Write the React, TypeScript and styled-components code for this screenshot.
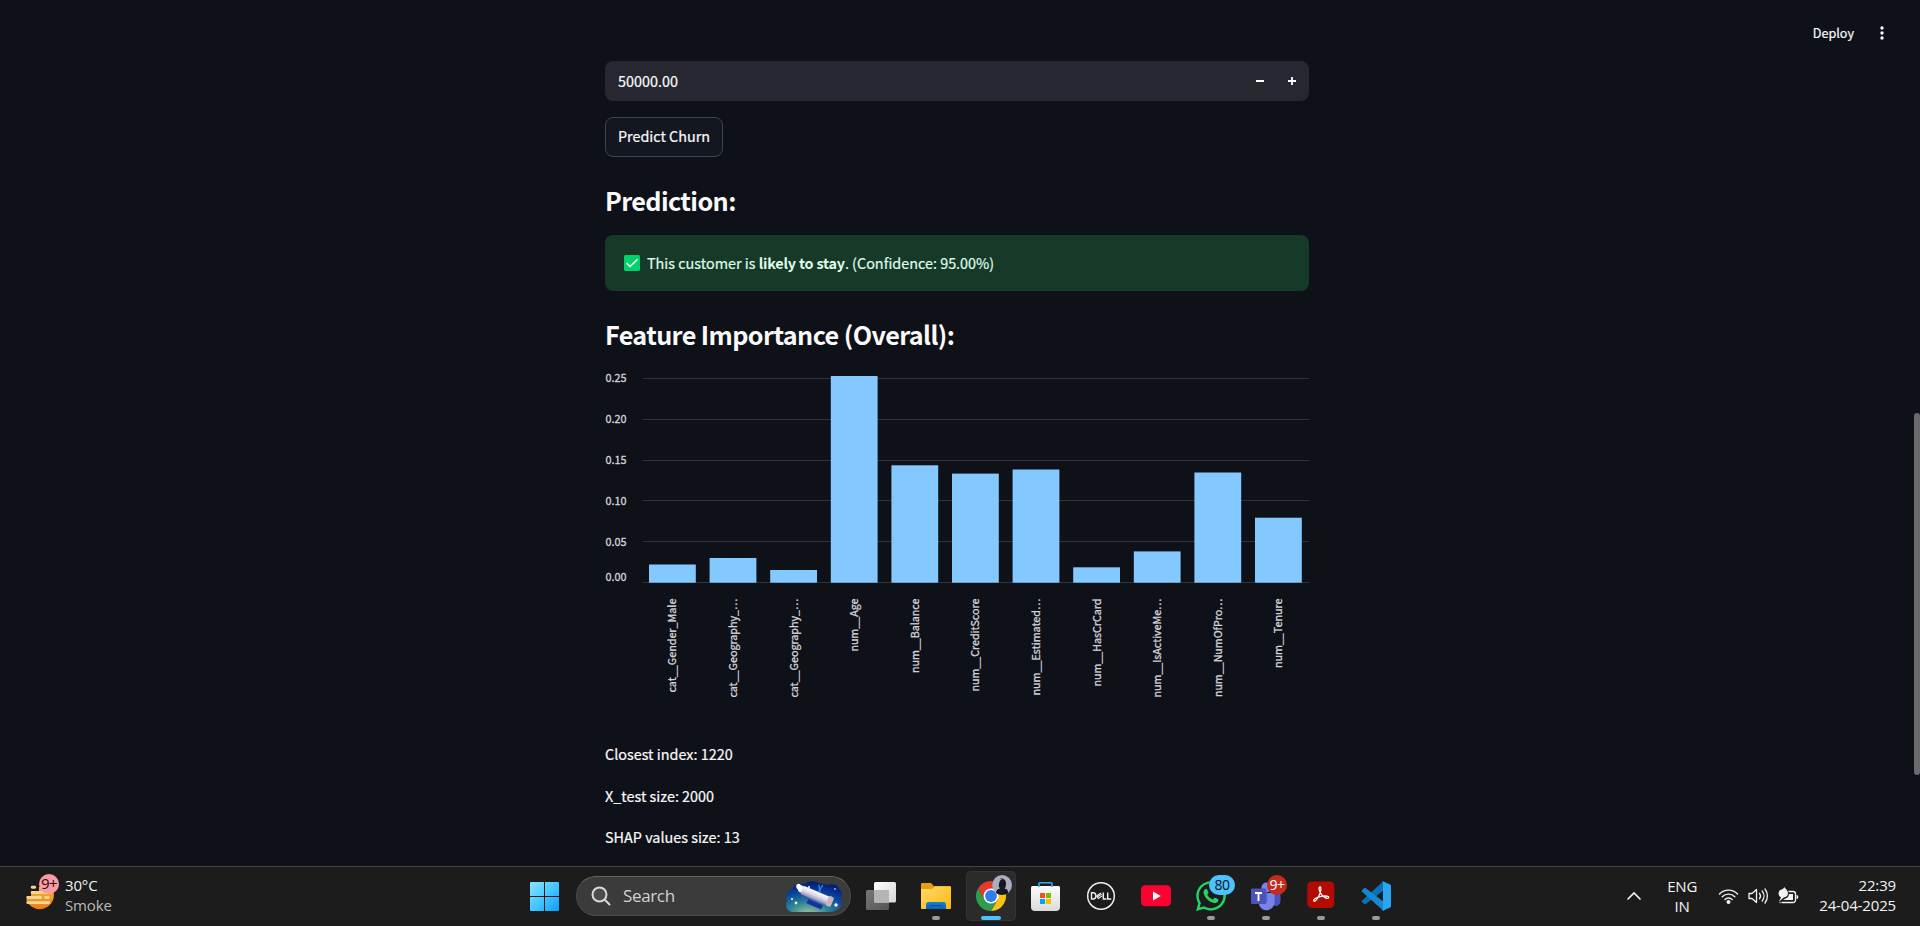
import React from "react";
import styled, { createGlobalStyle } from "styled-components";
import { FaWhatsapp } from "react-icons/fa";

const appFont = '"Noto Sans CJK SC", "Noto Sans", sans-serif';
const systemFont = '"Open Sans", "Noto Sans", sans-serif';

const GlobalStyle = createGlobalStyle`
  * { box-sizing: border-box; }
  body { margin: 0; background: #0e1117; overflow: hidden; }
`;

const Desktop = styled.div`
  width: 1920px;
  height: 926px;
  display: flex;
  flex-direction: column;
  overflow: hidden;
`;

const Page = styled.div`
  height: 866px;
  display: grid;
  grid-template-columns: 1fr 6px;
  background: #0e1117;
  color: #fafafa;
  font-family: ${appFont};
  font-size: 14.4px;
  -webkit-text-stroke: 0.2px currentColor;
`;

const Content = styled.div`
  display: flex;
  flex-direction: column;
  min-width: 0;
`;

const ScrollTrack = styled.div`
  padding-top: 413px;
`;

const ScrollThumb = styled.div`
  height: 362px;
  border-radius: 3px;
  background: #6b6b6d;
`;

const AppHeader = styled.header`
  height: 61px;
  padding: 5px 24px 0 0;
  display: flex;
  justify-content: flex-end;
  align-items: center;
  gap: 20px;
`;

const DeployButton = styled.span`
  font-size: 12.6px;
  line-height: 20px;
  padding-bottom: 1px;
`;

const Main = styled.main`
  width: 704px;
  margin-left: 605px;
  display: flex;
  flex-direction: column;
`;

const NumberInput = styled.div`
  height: 40px;
  padding: 0 1px 0 13px;
  display: flex;
  align-items: center;
  border-radius: 8px;
  background: #262730;
`;

const InputValue = styled.span`
  flex: 1;
  padding-bottom: 1px;
`;

const StepButton = styled.span`
  width: 32px;
  display: flex;
  justify-content: center;
`;

const PredictButton = styled.button`
  width: 118px;
  height: 40px;
  margin-top: 16px;
  padding: 0 0 3px;
  border: 1px solid #41444c;
  border-radius: 8px;
  background: #131720;
  color: #fafafa;
  font: 14.4px ${appFont};
  -webkit-text-stroke: 0.2px currentColor;
  white-space: nowrap;
`;

const Heading = styled.h3`
  height: 78px;
  margin: 0;
  padding-top: 26px;
  font-size: 25.2px;
  line-height: 34px;
  font-weight: 700;
  letter-spacing: -0.6px;
  -webkit-text-stroke: 0;
  white-space: nowrap;
`;

const SuccessAlert = styled.div`
  height: 56px;
  padding: 0 19px;
  display: flex;
  align-items: center;
  gap: 7px;
  border-radius: 8px;
  background: #173928;
  color: #dffde9;
  white-space: pre;
`;

const AlertText = styled.span`
  padding-bottom: 2px;
`;

const AlertStrong = styled.b`
  letter-spacing: -0.2px;
  -webkit-text-stroke: 0;
`;

const Chart = styled.svg`
  display: block;
  width: 704px;
  height: 372px;
  font-family: ${appFont};
  font-size: 10.8px;
  fill: #d3d5da;
  -webkit-text-stroke: 0;
`;

const ChartLabel = styled.text`
  stroke: #d3d5da;
  stroke-width: 0.3px;
`;

const Paragraph = styled.p`
  margin: 0 0 15.6px;
  line-height: 26px;
`;

const Taskbar = styled.footer`
  height: 60px;
  display: grid;
  grid-template-columns: 519px 882px 1fr;
  border-top: 1px solid #454548;
  background: #1c1c1c;
  color: #f3f3f3;
  font-family: ${systemFont};
  font-size: 15px;
  line-height: 20px;
`;

const Weather = styled.div`
  padding: 0 0 1px 24px;
  display: flex;
  align-items: center;
  gap: 5px;
`;

const IconSlot = styled.div`
  position: relative;
  display: flex;
`;

const TextStack = styled.div<{ $align?: string }>`
  padding-bottom: 3px;
  display: flex;
  flex-direction: column;
  text-align: ${(p) => p.$align ?? "left"};
  letter-spacing: -0.15px;
`;

const Muted = styled.span`
  color: #b9b9b9;
`;

const Badge = styled.span<{ $x: number; $y: number; $w: number; $bg: string; $fg: string; $size?: number }>`
  position: absolute;
  left: ${(p) => p.$x}px;
  top: ${(p) => p.$y}px;
  width: ${(p) => p.$w}px;
  height: 20px;
  border-radius: 10px;
  background: ${(p) => p.$bg};
  color: ${(p) => p.$fg};
  font-size: ${(p) => p.$size ?? 14}px;
  line-height: 19px;
  letter-spacing: -0.5px;
  text-align: center;
`;

const AppGroup = styled.div`
  display: flex;
  align-items: center;
  padding-bottom: 1px;
  gap: 5px;
`;

const Tile = styled.div<{ $active?: boolean }>`
  position: relative;
  width: 50px;
  height: 50px;
  border-radius: 5px;
  background: ${(p) => (p.$active ? "#2b2b2b" : "transparent")};
  box-shadow: ${(p) => (p.$active ? "inset 0 0 0 1px #343434" : "none")};
`;

const Indicator = styled.span<{ $active?: boolean }>`
  position: absolute;
  bottom: 1px;
  left: ${(p) => (p.$active ? 15 : 21)}px;
  width: ${(p) => (p.$active ? 20 : 8)}px;
  height: 4px;
  border-radius: 2px;
  background: ${(p) => (p.$active ? "#4cc2ff" : "#9a9a9a")};
`;

const SearchBox = styled.div`
  width: 275px;
  height: 40px;
  margin-left: 2px;
  padding: 0 7px 0 14px;
  display: flex;
  align-items: center;
  gap: 12px;
  border: 1px solid #4a4a4a;
  border-top-color: #636363;
  border-radius: 20px;
  background: #3b3b3b;
  color: #d2d2d2;
  font-size: 17px;
  letter-spacing: -0.35px;
`;

const SearchLabel = styled.span`
  flex: 1;
`;

const Tray = styled.div`
  padding: 0 24px 1px 0;
  display: flex;
  justify-content: flex-end;
  align-items: center;
`;

const TrayIcons = styled.div`
  margin: 0 20px 0 21px;
  display: flex;
  align-items: center;
  gap: 9px;
`;

const LanguageStack = styled(TextStack)`
  margin-left: 25px;
  padding-bottom: 1px;
`;

const bars = [
  { label: "cat__Gender_Male", top: 195.5, len: 94 },
  { label: "cat__Geography_…", top: 189, len: 99 },
  { label: "cat__Geography_…", top: 201, len: 99 },
  { label: "num__Age", top: 7, len: 53 },
  { label: "num__Balance", top: 96.3, len: 74.5 },
  { label: "num__CreditScore", top: 104.6, len: 93 },
  { label: "num__Estimated…", top: 100.5, len: 97 },
  { label: "num__HasCrCard", top: 198.3, len: 88 },
  { label: "num__IsActiveMe…", top: 182.4, len: 99 },
  { label: "num__NumOfPro…", top: 103.5, len: 98.5 },
  { label: "num__Tenure", top: 148.7, len: 69.5 },
];

const ticks = [
  { label: "0.25", line: 9.5, text: 13.3 },
  { label: "0.20", line: 50.5, text: 54.2 },
  { label: "0.15", line: 91.5, text: 95.1 },
  { label: "0.10", line: 131.5, text: 136 },
  { label: "0.05", line: 172.5, text: 176.9 },
  { label: "0.00", line: 213.5, text: 211.8 },
];

function ImportanceChart() {
  return (
    <Chart viewBox="0 0 704 372">
      {ticks.map((t) => (
        <g key={t.label}>
          <line x1="38" x2="704" y1={t.line} y2={t.line} stroke="#31333c" />
          <ChartLabel x="0.5" y={t.text} textLength="21" lengthAdjust="spacingAndGlyphs">{t.label}</ChartLabel>
        </g>
      ))}
      {bars.map((b, i) => {
        const x = 44 + i * 60.6;
        return (
          <g key={i}>
            <rect x={x} y={b.top} width="46.8" height={213.7 - b.top} fill="#83c9ff" />
            <ChartLabel
              transform={`translate(${x + 27.4} ${229.6 + b.len}) rotate(-90)`}
              textLength={b.len}
              lengthAdjust="spacingAndGlyphs"
            >
              {b.label}
            </ChartLabel>
          </g>
        );
      })}
    </Chart>
  );
}

const IconCanvas = styled.svg.attrs({ width: 50, height: 50, viewBox: "0 0 50 50" })`
  display: block;
`;

function StartIcon() {
  return (
    <IconCanvas>
      <defs>
        <linearGradient id="win" x1="11" y1="11" x2="40" y2="40" gradientUnits="userSpaceOnUse">
          <stop offset="0" stopColor="#8be3ff" /><stop offset=".5" stopColor="#46c8ff" /><stop offset="1" stopColor="#0f9bfb" />
        </linearGradient>
      </defs>
      <path d="M12 11h13v14H11V12a1 1 0 0 1 1-1zM26 11h13a1 1 0 0 1 1 1v13H26zM11 26h14v14H12a1 1 0 0 1-1-1zM26 26h14v13a1 1 0 0 1-1 1H26z" fill="url(#win)" />
    </IconCanvas>
  );
}

function TaskViewIcon() {
  return (
    <IconCanvas>
      <defs>
        <linearGradient id="tvw" x1="0" y1="0" x2="1" y2="1"><stop offset="0" stopColor="#fff" /><stop offset="1" stopColor="#d4d4d4" /></linearGradient>
        <linearGradient id="tvg" x1="0" y1="0" x2="1" y2="1"><stop offset="0" stopColor="#777" /><stop offset="1" stopColor="#565656" /></linearGradient>
      </defs>
      <rect x="10" y="19" width="23" height="20" rx="1.5" fill="url(#tvg)" />
      <rect x="18" y="11" width="22" height="20.5" rx="1.5" fill="url(#tvw)" />
      <path d="M18 19h15v12.5H19.5a1.5 1.5 0 0 1-1.5-1.5z" fill="#b5b5b5" />
    </IconCanvas>
  );
}

function ExplorerIcon() {
  return (
    <IconCanvas>
      <defs>
        <linearGradient id="fold" x1="0" y1="0" x2="1" y2="1"><stop offset="0" stopColor="#ffd968" /><stop offset="1" stopColor="#fdb813" /></linearGradient>
        <linearGradient id="foldb" x1="0" y1="0" x2="0" y2="1"><stop offset="0" stopColor="#1284d8" /><stop offset="1" stopColor="#0a63b4" /></linearGradient>
      </defs>
      <path d="M10 13a1 1 0 0 1 1-1h9l3 3.3h15.5a1.5 1.5 0 0 1 1.5 1.5V22H10z" fill="#e2a00a" />
      <path d="M10 18h11l3-2.7h15a1 1 0 0 1 1 1V37a1 1 0 0 1-1 1H11a1 1 0 0 1-1-1z" fill="url(#fold)" />
      <path d="M15 38v-4.5a2.500 2.500 0 0 1 2.500-2.500h15a2.500 2.500 0 0 1 2.500 2.500V38z" fill="url(#foldb)" />
      <path d="M18.500 34.500h13" stroke="#084a8c" />
    </IconCanvas>
  );
}

function ChromeIcon() {
  return (
    <IconCanvas>
      <path d="M12 17.500A15 15 0 0 1 38 17.500H25l-6.500 11.250z" fill="#e33b2e" />
      <path d="M38 17.500A15 15 0 0 1 25 40l6.500-11.250L25 17.500z" fill="#fbc116" />
      <path d="M12 17.500A15 15 0 0 0 25 40l6.500-11.250h-13z" fill="#2f9e4c" />
      <circle cx="25" cy="25" r="7.500" fill="#fff" />
      <circle cx="25" cy="25" r="5.900" fill="#2f7cec" />
      <circle cx="36.100" cy="14" r="9.900" fill="#a9aec0" />
      <path d="M30 22c0-3 2-4 4-4.500-1-1-1.500-3-1-5s1.500-4.500 3.500-4.500 3.500 2 3.500 4.500-.5 4-1.500 5c2 .5 4 1.500 3.500 4.500a9.900 9.900 0 0 1-12 0z" fill="#17181d" />
      <path d="M34 7.500h3" stroke="#c04860" />
    </IconCanvas>
  );
}

function StoreIcon() {
  return (
    <IconCanvas>
      <defs>
        <linearGradient id="bag" x1="0" y1="0" x2="0" y2="1"><stop offset="0" stopColor="#fdfdfd" /><stop offset="1" stopColor="#dadada" /></linearGradient>
      </defs>
      <path d="M10 16.500a1.500 1.500 0 0 1 1.500-1.500h26a1.500 1.500 0 0 1 1.500 1.500V36a4 4 0 0 1-4 4H14a4 4 0 0 1-4-4z" fill="url(#bag)" />
      <path d="M18 16v-3.200a1 1 0 0 1 1-1h11a1 1 0 0 1 1 1V16" fill="none" stroke="#27b4ee" strokeWidth="1.600" />
      <rect x="19" y="22" width="5" height="5" fill="#f25022" />
      <rect x="25" y="22" width="5" height="5" fill="#7fba00" />
      <rect x="19" y="28" width="5" height="5" fill="#00a4ef" />
      <rect x="25" y="28" width="5" height="5" fill="#ffb900" />
    </IconCanvas>
  );
}

function DellIcon() {
  return (
    <IconCanvas>
      <circle cx="25" cy="25" r="13.300" fill="none" stroke="#eee" strokeWidth="1.500" />
      <g fill="none" stroke="#eee" strokeWidth="1.400">
        <path d="M15.500 21.800v6.200h1.600c3.700 0 3.700-6.200 0-6.200z" />
        <path d="M20.500 25l4.500-3M21 26.300l4.700-3.200M22 27.800l4.500-3.200M20.500 25l2 2.800" strokeWidth="1.100" />
        <path d="M27.300 21.500v6.500h3.200M31.700 21.500v6.500h3.500" />
      </g>
    </IconCanvas>
  );
}

function YouTubeIcon() {
  return (
    <IconCanvas>
      <rect x="10" y="14.300" width="30" height="21" rx="4.500" fill="#ff0033" />
      <path d="M22 20.500v9l7.800-4.500z" fill="#fff" />
    </IconCanvas>
  );
}

function TeamsIcon() {
  return (
    <IconCanvas>
      <circle cx="25.500" cy="16.500" r="5" fill="#7b83eb" />
      <circle cx="35" cy="18" r="3.500" fill="#5059c9" />
      <path d="M28 22h10a1.500 1.500 0 0 1 1.500 1.500V30a5 5 0 0 1-8 4z" fill="#4b53bc" />
      <path d="M19 22h13.500a1 1 0 0 1 1 1v8.500a8 8 0 0 1-15.500 2.500z" fill="#7b83eb" />
      <path d="M18 31h8.500V22H18z" fill="#4b53bc" opacity=".4" />
      <rect x="10" y="17.500" width="15.300" height="15.500" rx="1.300" fill="#4b53bc" />
      <path d="M14 22h7M17.500 22v8" stroke="#fff" strokeWidth="1.900" />
    </IconCanvas>
  );
}

function AcrobatIcon() {
  return (
    <IconCanvas>
      <rect x="11.300" y="10.500" width="27" height="26.500" rx="4.500" fill="#b30b00" />
      <path
        d="M24 16c-1.600.2-1.200 4.200 1.600 7.700 2.300 3 6 4.600 7 3.200.9-1.600-3.300-2.400-7.300-1.600-4.200.8-8.300 3-7.500 4.600.9 1.500 3.700-1.800 5.300-5.300 1.700-3.700 2.500-8.800.9-8.600z"
        fill="none" stroke="#fff" strokeWidth="1.300" strokeLinejoin="round"
      />
    </IconCanvas>
  );
}

function CodeIcon() {
  return (
    <IconCanvas>
      <path d="M32 10.500L10.300 30.300l2.500 2.500c.6.6 1.200.6 1.900.1L32.500 19.500z" fill="#0a70b8" />
      <path d="M10.300 20l2.500-2.600c.6-.6 1.200-.6 1.900-.1l18 13.500-.4 8.900z" fill="#1688d2" />
      <path d="M32 10.200l7 3.300c.7.300 1 .8 1 1.500v20c0 .7-.3 1.200-1 1.500l-7 3.300c-.8.300-1.500.1-2-.4.800.5 2 .2 2-1V11.600c0-1.200-1.200-1.600-2-1 .5-.6 1.200-.8 2-.4z" fill="#29a5f2" />
    </IconCanvas>
  );
}

function SearchArt() {
  return (
    <svg width="58" height="32" viewBox="0 0 58 32">
      <defs>
        <radialGradient id="sky" cx=".4" cy="1.05" r="1">
          <stop offset="0" stopColor="#9fc596" /><stop offset=".35" stopColor="#2f8798" /><stop offset=".7" stopColor="#08449a" /><stop offset="1" stopColor="#061c78" />
        </radialGradient>
        <linearGradient id="scope" x1="0" y1="0" x2="0" y2="1">
          <stop offset="0" stopColor="#fff" /><stop offset=".5" stopColor="#dfd6ec" /><stop offset="1" stopColor="#8f87b8" />
        </linearGradient>
      </defs>
      <path d="M3 30c-3-3-2-7-1-9-2-5 0-10 5-12 2-5 7-6 12-5 4-3 10-4 15-1 5 2 7 1 9 2 5-2 10 0 11 4 4 3 3 7 2 10 2 5 0 9-4 11-4 2-8 2-12 2H10c-3 0-5 0-7-2z" fill="url(#sky)" />
      <g transform="rotate(23 30 16)">
        <rect x="12" y="11.500" width="8" height="7" rx="2" fill="#f2effa" />
        <rect x="16" y="11" width="30" height="9" rx="1" fill="url(#scope)" />
        <rect x="43" y="10" width="5.500" height="10.500" rx="2" fill="#c9b4bd" />
        <path d="M25 21.500h16v4.500H25z" fill="#1a2fa0" />
        <path d="M29 4l4.500 7M33 3l-1.500 8" stroke="#2789dc" strokeWidth="1.400" />
      </g>
      <ellipse cx="14" cy="7" rx="2.600" ry="3.200" transform="rotate(-25 14 7)" fill="#fff" />
      <circle cx="7" cy="19" r="1" fill="#fff" /><circle cx="11" cy="23" r="1.400" fill="#e9f4b0" />
      <circle cx="24" cy="7" r="1" fill="#fff" /><circle cx="51" cy="25" r="1.700" fill="#fff" /><circle cx="50" cy="9" r="1" fill="#8ab0ff" />
    </svg>
  );
}

function WeatherIcon() {
  return (
    <svg width="36" height="40" viewBox="0 0 36 40">
      <defs>
        <linearGradient id="sun" x1="0" y1="0" x2="0" y2="1"><stop offset="0" stopColor="#fbc640" /><stop offset="1" stopColor="#ee7d13" /></linearGradient>
      </defs>
      <circle cx="15.700" cy="19" r="14.200" fill="url(#sun)" />
      <path d="M0 3h24v8H15v4H7v8H0z" fill="#1c1c1c" />
      <path d="M8.200 11.300h2.500M8.200 16.500h15M3.700 21.500h13M21.500 21.500h3M3.700 26.600h21" stroke="#f0d698" strokeWidth="2.900" strokeLinecap="round" />
    </svg>
  );
}

export default function App() {
  return (
    <Desktop>
      <GlobalStyle />
      <Page>
        <Content>
          <AppHeader>
            <DeployButton>Deploy</DeployButton>
            <svg width="16" height="16" viewBox="0 0 16 16" fill="#fafafa">
              <circle cx="8" cy="3" r="1.700" /><circle cx="8" cy="8" r="1.700" /><circle cx="8" cy="13" r="1.700" />
            </svg>
          </AppHeader>
          <Main>
            <NumberInput>
              <InputValue>50000.00</InputValue>
              <StepButton><svg width="10" height="10"><path d="M1 5h8" stroke="#fff" strokeWidth="2" /></svg></StepButton>
              <StepButton><svg width="10" height="10"><path d="M1 5h8M5 1v8" stroke="#fff" strokeWidth="1.800" /></svg></StepButton>
            </NumberInput>
            <PredictButton>Predict Churn</PredictButton>
            <Heading>Prediction:</Heading>
            <SuccessAlert>
              <svg width="16" height="16" viewBox="0 0 16 16">
                <rect width="16" height="16" rx="1.500" fill="#00d26a" />
                <path d="M3 8.500l3 3L13 4.800" fill="none" stroke="#f4f4f4" strokeWidth="1.700" strokeLinecap="round" strokeLinejoin="round" />
              </svg>
              <AlertText>This customer is <AlertStrong>likely to stay</AlertStrong>. (Confidence: 95.00%)</AlertText>
            </SuccessAlert>
            <Heading>Feature Importance (Overall):</Heading>
            <ImportanceChart />
            <Paragraph>Closest index: 1220</Paragraph>
            <Paragraph>X_test size: 2000</Paragraph>
            <Paragraph>SHAP values size: 13</Paragraph>
          </Main>
        </Content>
        <ScrollTrack><ScrollThumb /></ScrollTrack>
      </Page>
      <Taskbar>
        <Weather>
          <IconSlot>
            <WeatherIcon />
            <Badge $x={15} $y={-2} $w={20} $size={15} $bg="#ff99a4" $fg="#101010">9+</Badge>
          </IconSlot>
          <TextStack><span>30°C</span><Muted>Smoke</Muted></TextStack>
        </Weather>
        <AppGroup>
          <Tile><StartIcon /></Tile>
          <SearchBox>
            <svg width="20" height="20" viewBox="0 0 20 20" fill="none" stroke="#d8d8d8" strokeWidth="2" strokeLinecap="round">
              <circle cx="8.500" cy="8.500" r="7" fill="#4a4d4e" /><path d="M13.800 13.800L18.500 18.500" />
            </svg>
            <SearchLabel>Search</SearchLabel>
            <SearchArt />
          </SearchBox>
          <Tile><TaskViewIcon /></Tile>
          <Tile><ExplorerIcon /><Indicator /></Tile>
          <Tile $active><ChromeIcon /><Indicator $active /></Tile>
          <Tile><StoreIcon /></Tile>
          <Tile><DellIcon /></Tile>
          <Tile><YouTubeIcon /></Tile>
          <Tile>
            <IconCanvas><FaWhatsapp x={8} y={8} size={34} color="#25d366" /></IconCanvas>
            <Badge $x={23} $y={4} $w={26} $bg="#4cc2ff" $fg="#101010">80</Badge>
            <Indicator />
          </Tile>
          <Tile>
            <TeamsIcon />
            <Badge $x={26} $y={4} $w={20} $bg="#c42b1c" $fg="#fff">9+</Badge>
            <Indicator />
          </Tile>
          <Tile><AcrobatIcon /><Indicator /></Tile>
          <Tile><CodeIcon /><Indicator /></Tile>
        </AppGroup>
        <Tray>
          <svg width="16" height="10" viewBox="0 0 16 10"><path d="M2 8l6-6 6 6" fill="none" stroke="#f3f3f3" strokeWidth="1.700" strokeLinecap="round" /></svg>
          <LanguageStack $align="center"><span>ENG</span><span>IN</span></LanguageStack>
          <TrayIcons>
            <svg width="21" height="18" viewBox="0 0 21 18" fill="none" stroke="#f3f3f3" strokeWidth="1.400" strokeLinecap="round">
              <path d="M1.500 7a12.500 12.500 0 0 1 18 0M4.200 9.800a8.700 8.700 0 0 1 12.600 0M6.900 12.500a5 5 0 0 1 7.200 0" /><circle cx="10.500" cy="15" r="1.300" fill="#f3f3f3" />
            </svg>
            <svg width="21" height="18" viewBox="0 0 21 18" fill="none" stroke="#f3f3f3" strokeWidth="1.300" strokeLinecap="round" strokeLinejoin="round">
              <path d="M1 6.500h3L8.500 2.500v13L4 11.500H1zM11.500 6.300a4.500 4.500 0 0 1 0 5.400M14.200 4a8 8 0 0 1 0 10M17 2a11.500 11.500 0 0 1 0 14" />
            </svg>
            <svg width="21" height="18" viewBox="0 0 21 18" fill="none" stroke="#f3f3f3">
              <path d="M10.500 4.500H15a2.500 2.500 0 0 1 2.500 2.500v6A2.500 2.500 0 0 1 15 15.500H3.500M1.500 15.500h1" strokeWidth="1.300" />
              <path d="M18.500 8v4c1.300 0 1.800-.7 1.800-2s-.5-2-1.800-2z" fill="#f3f3f3" stroke="none" />
              <path d="M10.800 7H15v6H5l4-2.300c1.500-.9 2-2.200 1.800-3.700z" fill="#f3f3f3" stroke="none" />
              <path d="M6.500 0c.3 1.500 3.500 3 3.500 6.300 0 2.500-1.800 4-4.200 4.200L1 14.500l2-4.300C1.200 9.500.3 8 .7 5.500.9 3.800 2 3 3.500 2.500 5 2 6 1.200 6.500 0z" fill="#f3f3f3" stroke="none" />
            </svg>
          </TrayIcons>
          <TextStack $align="right"><span>22:39</span><span>24-04-2025</span></TextStack>
        </Tray>
      </Taskbar>
    </Desktop>
  );
}
